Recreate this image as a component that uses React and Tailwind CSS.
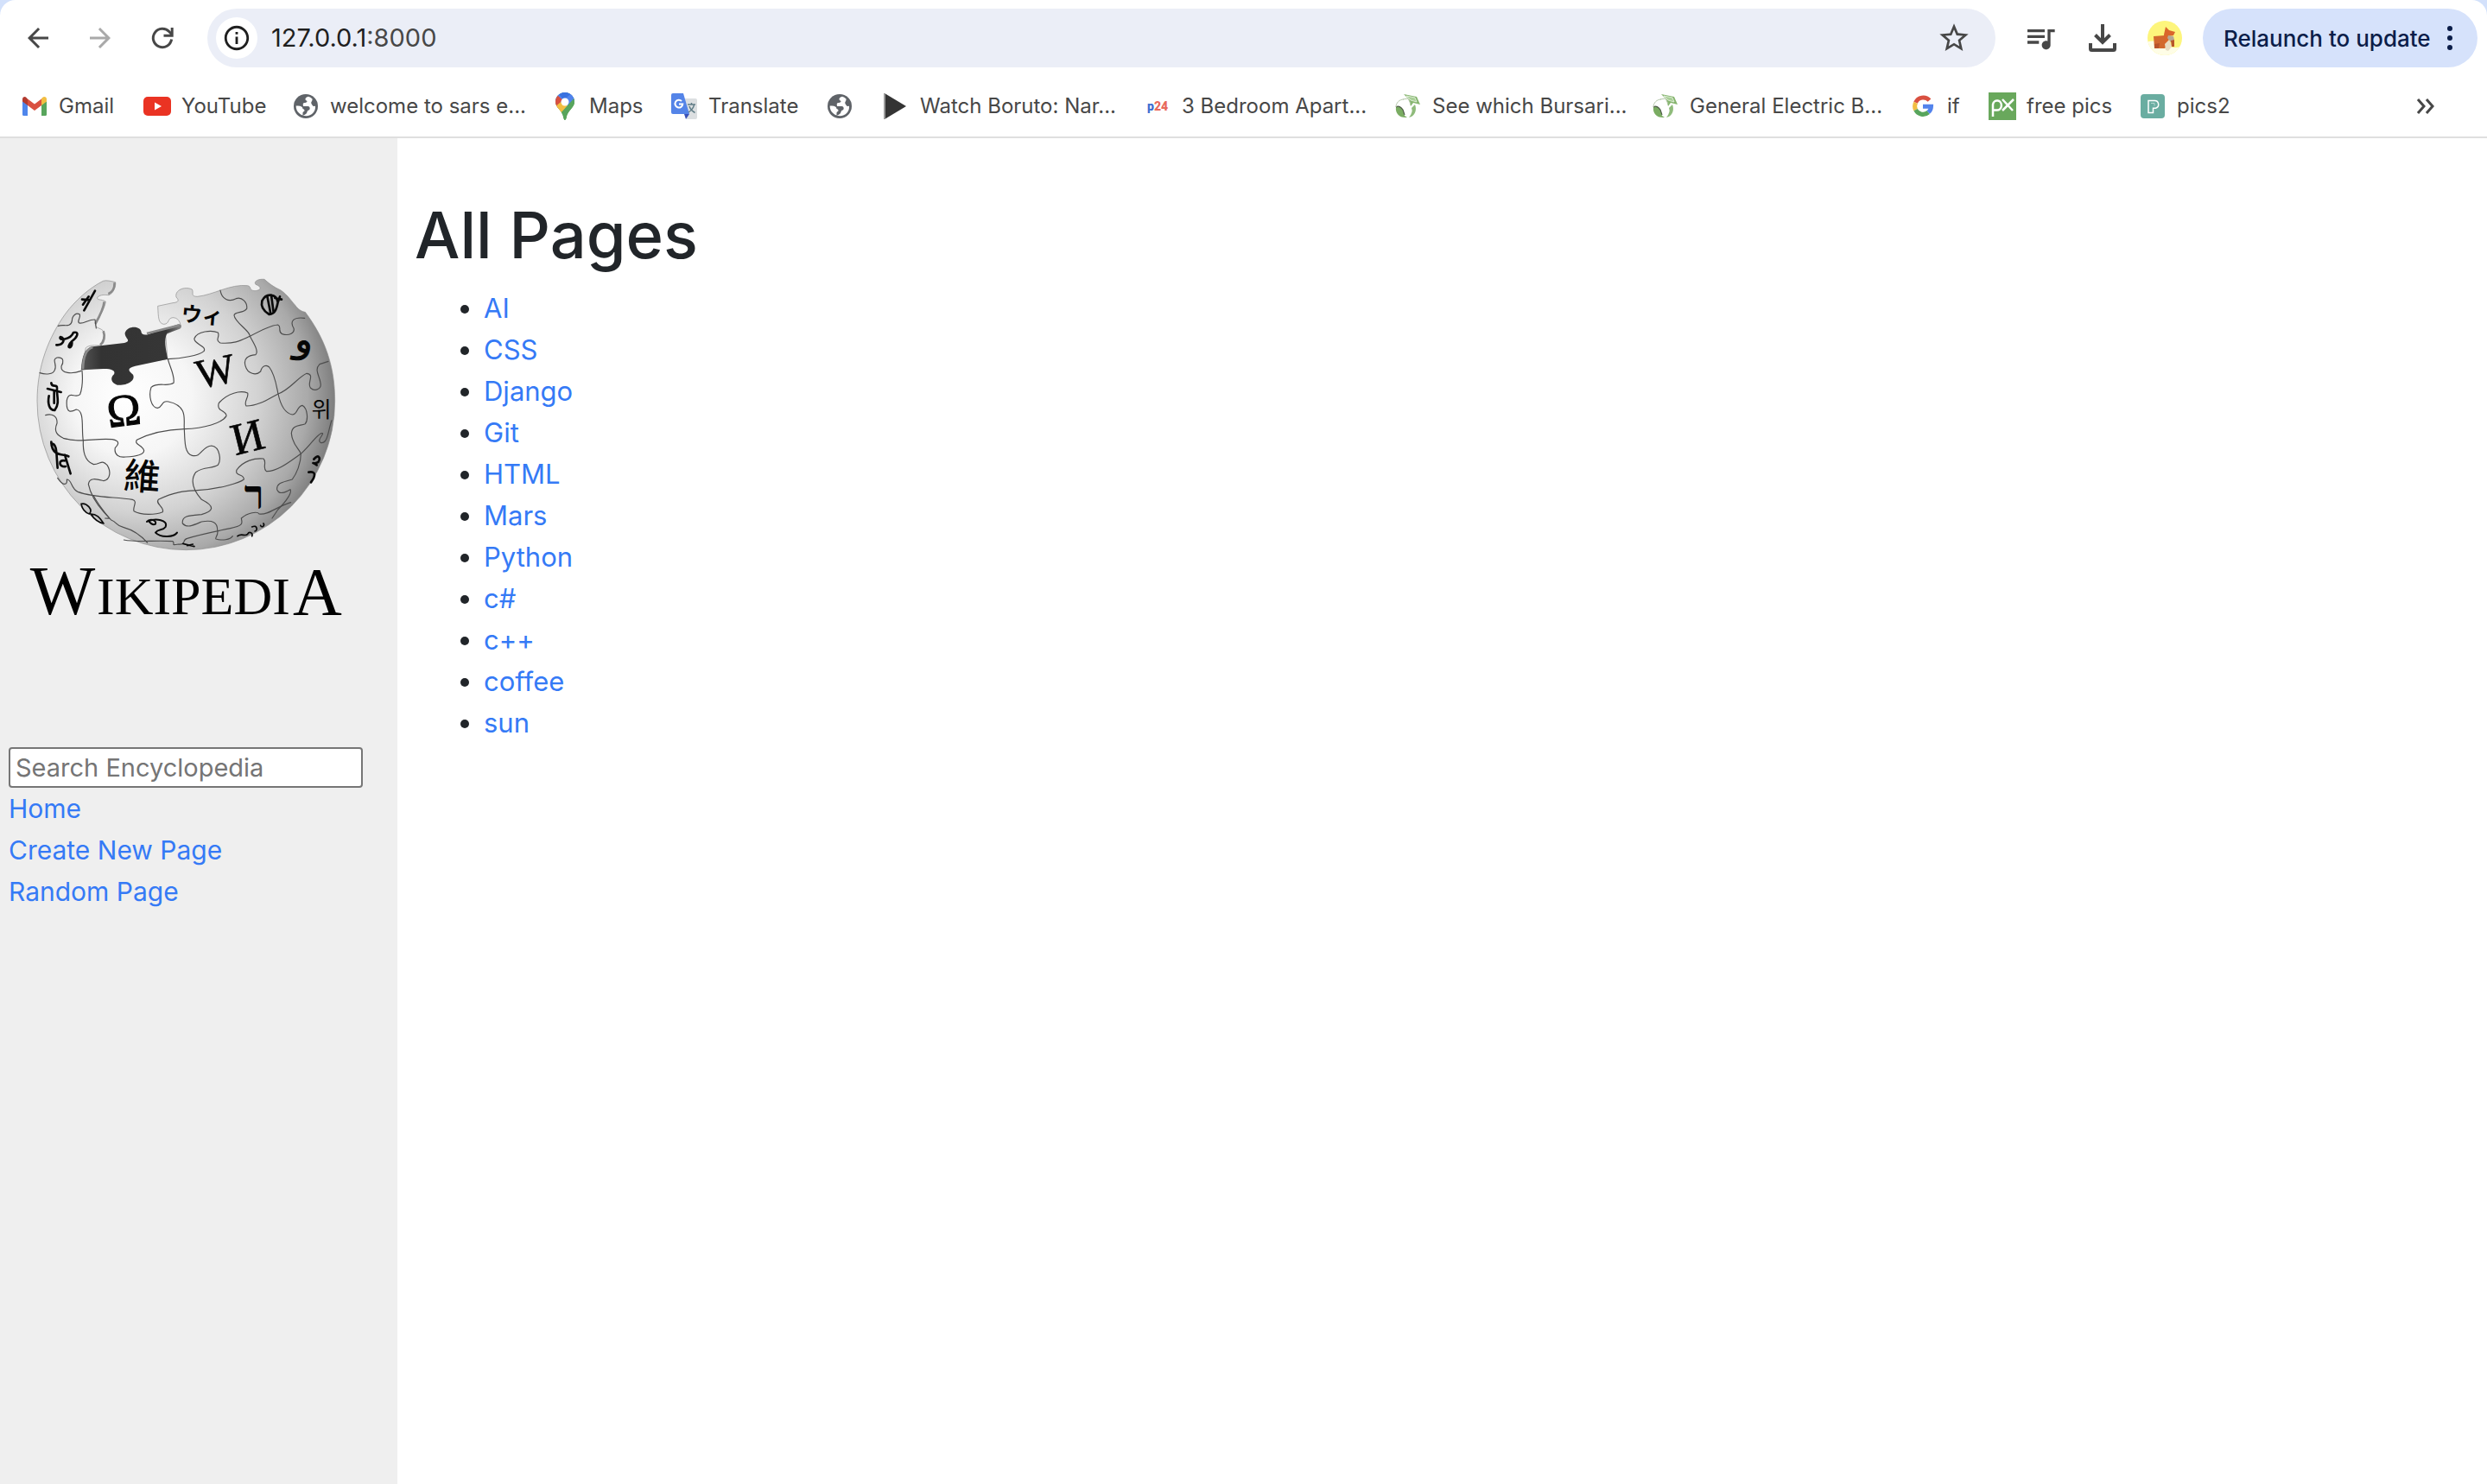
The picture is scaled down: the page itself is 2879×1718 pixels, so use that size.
import React from "react";
import { MdArrowBack, MdArrowForward, MdInfoOutline, MdStarOutline, MdQueueMusic } from "react-icons/md";

const ReloadIcon = () => (
  <svg viewBox="0 0 36 36" className="size-9" fill="none" stroke="currentColor" strokeWidth="3">
    <path d="M28.6 19.5A10.7 10.7 0 1 1 26 10.800L29 14" />
    <path d="M29.200 6V15.200H19.500" />
  </svg>
);

const DownloadIcon = () => (
  <svg viewBox="0 0 32 32" className="size-8" fill="none" stroke="currentColor" strokeWidth="4">
    <path d="M16 0V20" />
    <path d="M7.500 12.500L16 21L24.500 12.500" />
    <path d="M2 22V28.500Q2 30 3.500 30H28.500Q30 30 30 28.500V22" />
  </svg>
);

const DotsIcon = () => (
  <svg viewBox="0 0 8 30" className="h-[30px] w-2" fill="currentColor">
    <circle cx="4" cy="4" r="3" />
    <circle cx="4" cy="15" r="3" />
    <circle cx="4" cy="26" r="3" />
  </svg>
);

const Avatar = () => (
  <svg viewBox="0 0 40 40" className="size-10">
    <defs>
      <clipPath id="avatar-clip"><circle cx="20" cy="20" r="20" /></clipPath>
    </defs>
    <g clipPath="url(#avatar-clip)">
      <rect width="40" height="40" fill="#fdf57c" />
      <path d="M0 24Q10 22 20 28T40 29V40H0Z" fill="#fefde6" />
      <path d="M7 18L20 17L25 28L20 32H8Z" fill="#d2692f" />
      <path d="M19 16L21 7L25 11L32 13L30 17L24 18L26 28L20 26Z" fill="#d9662b" />
      <path d="M24 17L30 18L31 22L27 25L23 20Z" fill="#b5a895" />
      <path d="M20 27L25 22L28 30L24 35L21 34Z" fill="#e9dcc3" />
      <path d="M27 23L31 22V30H28Z" fill="#b8562a" />
      <path d="M8 27L14 26L13 32H8Z" fill="#b9532a" />
    </g>
  </svg>
);

const GmailIcon = () => (
  <svg viewBox="0 0 32 32" className="size-8">
    <path d="M2 10V25.500Q2 27 3.500 27H8V14Z" fill="#4f86ec" />
    <path d="M24 14V27H28.500Q30 27 30 25.500V10Z" fill="#58a55c" />
    <path d="M24 8V15L30 10.500V8Q30 5 27 5Q26 5 24 7Z" fill="#f2be42" />
    <path d="M8 7.500L16 13.500L24 7.500V15L16 21L8 15Z" fill="#d95040" />
    <path d="M2 8V10.500L8 15V7.500Q6 5 5 5Q2 5 2 8Z" fill="#b33a2e" />
  </svg>
);

const YouTubeIcon = () => (
  <svg viewBox="0 0 32 32" className="size-8">
    <rect y="5" width="32" height="22" rx="5" fill="#ea3323" />
    <path d="M13 11.500V20.500L21 16Z" fill="#fff" />
  </svg>
);

const GlobeIcon = () => (
  <svg viewBox="0 0 32 32" className="size-8">
    <circle cx="16" cy="16" r="14" fill="#5f6368" />
    <path d="M19 4.800C15 5.500 14.500 9 17 9.500C18.500 10.500 16.500 12 14.500 12C12 12.500 13 14 13 16H18.500C21.500 16.500 21 20 19.500 20.500C17 21 18 24 16 25C15 26 14 26 12.500 26.600C20.500 29.500 28 23 27 15.500C24.500 17 23.500 15 22.500 13C21.500 11 24 10 23.500 7.500Q21.500 5.500 19 4.800Z" fill="#fff" />
    <path d="M4.700 15.500H7C10.500 15.500 12.500 17 12.500 19C14.500 19.500 15 21 14 22C12 22.500 12.500 24 12.500 26.600C7 24.500 4.500 20 4.700 15.500Z" fill="#fff" />
  </svg>
);

const MapsIcon = () => (
  <svg viewBox="0 0 32 32" className="size-8">
    <defs>
      <clipPath id="pin-clip">
        <path d="M16 0C9.500 0 5 5 5 11C5 18 13 20 14.500 30Q15 32 16 32Q17 32 17.500 30C19 20 27 18 27 11C27 5 22.500 0 16 0Z" />
      </clipPath>
    </defs>
    <g clipPath="url(#pin-clip)">
      <rect width="32" height="32" fill="#58a55c" />
      <path d="M0 0H32V3L16 22L4 10Z" fill="#5083ed" />
      <path d="M7 0H24L16 10Z" fill="#3a72e0" />
      <path d="M0 2L7.500 3.500L16 11L8 19L0 14Z" fill="#d95040" />
      <path d="M3 18L16 7L22 13L9 27Z" fill="#f2be42" />
      <path d="M11 11L24 1L30 8L20 16Z" fill="#5083ed" />
      <path d="M20 14L28 5V20L16 32H12L11 24Z" fill="#58a55c" />
    </g>
    <circle cx="16" cy="11" r="4.500" fill="#fff" />
  </svg>
);

const TranslateIcon = () => (
  <svg viewBox="0 0 32 32" className="size-8">
    <path d="M14 7H29Q31 7 31 9V29Q31 31 29 31H19Z" fill="#dcdfe1" />
    <path d="M16 25H22L18 31Z" fill="#3a52b8" />
    <path d="M3 1H15L22 25H3Q1 25 1 23V3Q1 1 3 1Z" fill="#5484e8" />
    <path d="M13 10A4.400 4.400 0 1 0 14.300 13.500H10" fill="none" stroke="#fff" strokeWidth="2" />
    <path d="M20 14H29M24.500 12V14M27.500 14C27 18 24 21 21 23M22 16C23 19 26 22 28.500 23.500" fill="none" stroke="#607d87" strokeWidth="1.500" />
  </svg>
);

const PlayIcon = () => (
  <svg viewBox="0 0 32 32" className="size-8">
    <path d="M3 1L28 16L3 31Z" fill="#343434" />
    <path d="M3 1V31" stroke="#9b9b9b" strokeWidth="2" />
  </svg>
);

const P24Icon = () => (
  <svg viewBox="0 0 32 32" className="size-8" fontFamily="Roboto, sans-serif" fontWeight="900" fontSize="14">
    <text x="4" y="21" fill="#3f6fd1">p</text>
    <text x="12" y="21" fill="#e8695c">24</text>
  </svg>
);

const BursaryIcon = () => (
  <svg viewBox="0 0 32 32" className="size-8">
    <path d="M11 2L26 5L30 14L22 12L19 16L17 8Z" fill="#86b56f" />
    <path d="M14 4L24 6L26 11L19 9Z" fill="#a9cf97" stroke="#eaf4e5" strokeWidth="0.800" />
    <path d="M2 17C5 15 8 17 10 20L12 27L15 29C6 30 1 24 2 17" fill="#7aac62" />
    <path d="M2 17C5 15 8 17 10 20L12 26" fill="none" stroke="#4c5a46" strokeWidth="1.200" />
    <path d="M2 17C2 12 6 8 11 8" fill="none" stroke="#b5c7ab" strokeWidth="1" />
    <path d="M20 28C25 25 26 19 24 14L20 18Q22 23 17 29Z" fill="#8fbb7b" />
    <path d="M10 8L16 7L19 13" fill="none" stroke="#b5c7ab" strokeWidth="1" />
  </svg>
);

const GoogleIcon = () => (
  <svg viewBox="0 0 32 32" className="size-8" fill="none" strokeWidth="5">
    <path d="M23.500 9.200A9.500 9.500 0 0 0 7.600 11.800" stroke="#d95040" />
    <path d="M7.600 11.800A9.500 9.500 0 0 0 7.600 20.200" stroke="#f2be42" />
    <path d="M7.600 20.200A9.500 9.500 0 0 0 22.300 23" stroke="#58a55c" />
    <path d="M22.300 23A9.500 9.500 0 0 0 25.500 16.300H16" stroke="#5383ec" />
  </svg>
);

const PxIcon = () => (
  <svg viewBox="0 0 32 32" className="size-8" fill="none" stroke="#fff" strokeWidth="2.500">
    <rect width="32" height="32" fill="#69a85c" stroke="none" />
    <path d="M5 28V14A5 5.500 0 1 1 9.500 20.500H5M16 8L28 21M29 8L16 21" />
  </svg>
);

const PexelsIcon = () => (
  <svg viewBox="0 0 32 32" className="size-8" fill="none" stroke="#fff" strokeWidth="1.500">
    <rect x="2" y="2" width="28" height="28" rx="4" fill="#6aada1" stroke="none" />
    <path d="M11 9.500H18A4.500 4.500 0 0 1 19.500 18.300H16.500V23.500H11Z" />
    <path d="M14 12.500H18V15.500" strokeWidth="1" opacity="0.500" />
  </svg>
);

const bookmarks = [
  { label: "Gmail", icon: GmailIcon, width: "w-[142px]" },
  { label: "YouTube", icon: YouTubeIcon, width: "w-[172px]" },
  { label: "welcome to sars e...", icon: GlobeIcon, width: "w-[300px]" },
  { label: "Maps", icon: MapsIcon, width: "w-[138px]" },
  { label: "Translate", icon: TranslateIcon, width: "w-[180px]" },
  { label: "", icon: GlobeIcon, width: "w-[65px]" },
  { label: "Watch Boruto: Nar...", icon: PlayIcon, width: "w-[303px]" },
  { label: "3 Bedroom Apart...", icon: P24Icon, width: "w-[290px]" },
  { label: "See which Bursari...", icon: BursaryIcon, width: "w-[298px]" },
  { label: "General Electric B...", icon: BursaryIcon, width: "w-[298px]" },
  { label: "if", icon: GoogleIcon, width: "w-[92px]" },
  { label: "free pics", icon: PxIcon, width: "w-[174px]" },
  { label: "pics2", icon: PexelsIcon, width: "w-[120px]" },
];

function Browser() {
  return (
    <header className="border-b-2 border-[#dfdfdf] bg-[#d3e1fb] text-[#474747]">
      <div className="rounded-t-[18px] bg-white">
        <div className="flex h-22 items-center pr-[11px] pl-2">
          <button aria-label="Back" className="flex w-18 justify-center"><MdArrowBack className="size-9" /></button>
          <button aria-label="Forward" className="flex w-18 justify-center text-[#a9a9a9]"><MdArrowForward className="size-9" /></button>
          <button aria-label="Reload" className="flex w-18 justify-center"><ReloadIcon /></button>
          <div className="ml-4 flex h-17 flex-1 items-center rounded-full bg-[#ebeef7] pr-7 pl-[10px]">
            <button aria-label="Site information" className="flex size-12 items-center justify-center rounded-full bg-white text-[#1f1f1f]">
              <MdInfoOutline className="size-[34px]" />
            </button>
            <div className="ml-4 flex-1 text-[29px]"><span className="text-[#1f1f1f]">127.0.0.1</span>:8000</div>
            <button aria-label="Bookmark this page"><MdStarOutline className="size-10" /></button>
          </div>
          <button aria-label="Media controls" className="ml-4 flex w-18 justify-center"><MdQueueMusic className="size-10" /></button>
          <button aria-label="Downloads" className="flex w-18 justify-center"><DownloadIcon /></button>
          <button aria-label="Profile" className="flex w-18 justify-center"><Avatar /></button>
          <button className="ml-2 flex h-17 w-[318px] items-center justify-between rounded-full bg-[#d6e2fb] pr-7 pl-6 text-[26px] font-medium text-[#0b1d49]">
            <span className="whitespace-nowrap">Relaunch to update</span>
            <DotsIcon />
          </button>
        </div>
        <nav aria-label="Bookmarks" className="flex h-[70px] items-center pl-6 text-[24px]">
          {bookmarks.map(({ label, icon: Icon, width }, i) => (
            <a key={i} href="#" aria-label={label || "Bookmark"} className={`flex shrink-0 items-center gap-3 whitespace-nowrap ${width}`}>
              <Icon />
              {label && <span>{label}</span>}
            </a>
          ))}
          <button aria-label="More bookmarks" className="mr-[60px] ml-auto">
            <svg viewBox="0 0 22 20" className="h-5 w-[22px]" fill="none" stroke="currentColor" strokeWidth="3">
              <path d="M2 2L9 10L2 18M12 2L19 10L12 18" />
            </svg>
          </button>
        </nav>
      </div>
    </header>
  );
}

function WikipediaLogo() {
  return (
    <svg viewBox="0 0 1200 1320" className="h-[440px] w-[400px]" role="img" aria-label="Wikipedia">
      <defs>
        <radialGradient id="sphere" gradientUnits="userSpaceOnUse" cx="470" cy="470" r="680" fx="370" fy="480">
          <stop offset="0" stopColor="#ffffff" />
          <stop offset="0.300" stopColor="#f6f6f6" />
          <stop offset="0.600" stopColor="#d2d2d2" />
          <stop offset="0.820" stopColor="#a9a9a9" />
          <stop offset="1" stopColor="#696969" />
        </radialGradient>
        <linearGradient id="hole" x1="0" y1="0" x2="1" y2="0">
          <stop offset="0" stopColor="#555" />
          <stop offset="0.200" stopColor="#333" />
          <stop offset="0.850" stopColor="#363636" />
          <stop offset="1" stopColor="#888" />
        </linearGradient>
      </defs>
      <path
        fill="url(#sphere)"
        stroke="#8d8d8d"
        strokeWidth="2"
        d="M298 76C308 72 325 76 341 80C343 95 335 118 318 125C303 124 290 122 278 133C276 144 292 138 307 147C305 168 288 195 272 225C268 240 288 238 297 248C308 262 306 290 290 300C270 300 250 297 238 308L222 385L522 347L515 262L568 235C566 215 556 203 540 203C520 205 530 226 508 226C490 222 490 205 488 163L540 152C562 150 562 142 552 132C546 108 580 93 607 105C614 115 600 130 625 130C680 125 740 85 800 92C815 95 803 109 825 110C850 108 848 95 828 88C820 78 835 68 858 70C875 85 890 97 915 108C940 125 955 150 965 160C975 175 990 183 1000 184C1068 275 1103 370 1103 493A517 517 0 0 1 69 493C69 370 110 270 167 190C200 145 250 100 298 76Z"
      />
      <path
        fill="url(#hole)"
        d="M222 385C224 335 236 308 262 304L372 291C400 283 372 276 374 256C384 230 424 232 430 250C430 262 442 266 458 260L560 226C572 224 574 242 560 244L520 258C508 280 516 315 523 347L410 371C380 378 385 387 402 401C412 422 380 440 347 437C325 430 322 412 336 400C344 385 320 380 298 381Z"
      />
      <path fill="none" stroke="#8a8a8a" strokeWidth="8" d="M228 382C229 340 238 312 262 306M338 82C338 100 330 116 316 121M302 148C300 170 286 198 271 225M299 250C306 268 300 288 288 298M450 258L562 230" />
      <g fill="none" stroke="#4d4d4d" strokeWidth="3.500" strokeLinecap="round" strokeLinejoin="round">
        <path d="M142 232C160 225 185 240 190 215C190 195 205 185 217 192C222 205 205 215 215 222C230 226 250 208 270 210L274 240" />
        <path d="M78 395C100 402 125 400 130 385C140 365 118 350 138 342C165 340 160 360 153 372C150 398 190 400 222 388" />
        <path d="M225 388C228 420 225 450 218 470C200 485 180 455 172 490C168 540 190 530 205 522C235 525 222 590 229 630" />
        <path d="M98 542C120 535 140 545 138 570C125 600 140 612 160 622C220 640 270 620 330 626C360 632 350 645 340 655C335 680 355 690 375 687C410 685 440 680 440 665C435 645 405 645 415 628C460 605 520 592 580 590C650 588 710 570 726 545C728 525 690 530 700 500C730 465 775 455 800 465C805 480 785 495 795 510C840 510 880 480 906 468C945 455 975 410 1005 397C1035 400 1005 430 1018 447C1035 462 1058 450 1053 430C1050 405 1030 385 1050 365L1080 355" />
        <path d="M229 630C228 665 232 700 265 713C290 712 292 695 312 715C325 735 325 765 300 770C280 765 250 755 247 782C255 820 275 850 300 878C325 905 325 900 305 900" />
        <path d="M523 347C530 375 548 405 543 430C520 445 490 425 465 445C455 475 465 515 487 517C505 515 500 490 525 495C595 510 577 560 580 590C582 630 580 675 607 682C640 690 640 650 675 648C705 652 708 700 697 715C675 730 650 718 620 740C595 775 618 810 640 835C690 860 680 875 640 887C600 890 570 890 574 918C590 935 610 925 640 912C680 905 695 915 695 940C700 960 685 968 690 972C710 978 740 975 748 962" />
        <path d="M523 347C570 345 630 335 648 320C660 300 610 295 615 275C625 250 675 245 697 255C705 270 685 280 705 291C760 295 780 280 808 268C850 245 880 230 905 228C920 235 902 250 920 260C945 268 965 255 960 240C945 215 960 200 998 205" />
        <path d="M705 108C710 140 735 150 760 137C780 130 800 150 797 172C785 190 755 180 753 195C755 220 810 250 808 268C820 290 840 320 828 332C800 335 785 345 792 370C800 400 830 405 845 390C850 370 865 365 875 375C895 400 900 440 906 468C915 510 930 535 955 540C975 540 970 510 990 508C1010 520 1010 560 1000 572C980 580 955 575 952 605C955 645 980 660 985 676C985 710 970 745 955 765C925 775 900 775 902 800C910 820 930 810 948 800C955 810 935 840 905 870L885 900" />
        <path d="M140 760C160 790 175 785 172 765C190 765 185 795 210 808C270 830 340 825 400 835C420 840 400 860 405 875C430 890 480 888 505 878C512 860 478 850 490 835C550 805 590 805 625 803C700 800 775 775 787 765C788 745 755 755 762 732C785 700 825 690 855 693C868 705 850 725 865 737C905 738 950 700 985 676C1020 645 1035 615 1055 605C1075 600 1035 630 1055 638C1080 640 1080 590 1092 560" />
        <path d="M265 822C280 850 310 890 325 905C350 915 340 925 370 932C400 940 425 955 452 985M370 975C420 985 480 975 540 980C550 990 530 995 560 990C590 992 570 975 590 970C640 955 690 945 740 935C790 925 780 915 778 900C800 880 835 875 840 885C870 890 900 860 950 845" />
      </g>
      <g fill="#060606" fontFamily="'Liberation Serif', serif">
        <text x="620" y="438" fontSize="144" stroke="#060606" strokeWidth="2" transform="rotate(-12 688 390)">W</text>
        <text x="312" y="578" fontSize="158" stroke="#060606" strokeWidth="3" transform="rotate(-7 370 530)">Ω</text>
        <text x="744" y="670" fontSize="156" stroke="#060606" strokeWidth="2" transform="rotate(-14 800 620)">И</text>
        <text x="370" y="800" fontSize="126" fontFamily="'Noto Sans CJK TC', sans-serif" fontWeight="500" transform="rotate(4 430 760)">維</text>
        <text x="570" y="220" fontSize="72" fontFamily="'Noto Sans CJK JP', sans-serif" fontWeight="700" transform="rotate(5 635 195)">ウィ</text>
        <text x="1022" y="550" fontSize="74" fontFamily="'Noto Sans CJK KR', sans-serif">위</text>
        <text x="962" y="322" fontSize="130" fontFamily="'DejaVu Sans', sans-serif" stroke="#060606" strokeWidth="3" transform="rotate(12 985 310)">و</text>
        <text x="788" y="868" fontSize="140" fontFamily="'Liberation Serif', serif" fontWeight="700">ר</text>
      </g>
      <g fill="none" stroke="#0a0a0a" strokeWidth="8" strokeLinecap="round" strokeLinejoin="round">
        <path d="M270 110L232 178M225 140L252 142M228 158L248 130" />
        <path d="M136 298C160 300 170 275 150 270C140 285 185 280 195 255C220 250 205 275 190 285C165 310 190 315 190 290" />
        <path d="M105 450L152 462M118 430C120 450 140 430 138 450C135 470 150 500 130 525C110 525 105 500 110 475M128 460V500" />
        <path d="M118 635C120 690 165 675 178 685M118 640C140 640 135 680 140 725M165 680L185 745M165 700C140 695 145 725 168 720" />
        <path d="M222 850C240 845 265 870 250 885C235 880 225 865 222 850M255 885C280 885 290 905 300 918C280 915 265 900 255 885" strokeWidth="5" />
        <path d="M450 912C460 900 485 905 480 920C470 925 460 915 455 908M455 910C480 900 525 905 515 930C505 945 490 935 480 950C500 970 545 965 555 950" strokeWidth="6" />
        <path d="M850 145C865 115 900 120 905 150C900 175 895 190 875 192C855 180 845 165 850 145M868 128L880 190M882 125L890 185M895 135L918 140M912 130L905 150" />
        <path d="M1030 695C1045 675 1055 690 1045 705C1025 715 1020 700 1040 715M1012 740C1040 735 1035 755 1020 775" />
        <path d="M765 962C780 950 790 965 800 955C805 945 820 950 815 962M815 930C835 920 835 945 825 945M845 925C850 935 860 925 855 918M575 988L615 998M590 995L610 990" strokeWidth="5" />
      </g>
      <g fill="#000" fontFamily="'Liberation Serif', serif">
        <text x="44" y="1234" fontSize="240">W</text>
        <text x="276" y="1234" fontSize="186">IKIPEDI</text>
        <text x="957" y="1234" fontSize="236">A</text>
      </g>
    </svg>
  );
}

const pages = ["AI", "CSS", "Django", "Git", "HTML", "Mars", "Python", "c#", "c++", "coffee", "sun"];
const links = ["Home", "Create New Page", "Random Page"];

export default function App() {
  return (
    <div className="flex min-h-screen flex-col bg-white font-['Inter',sans-serif] text-[#212529]">
      <Browser />
      <div className="flex flex-1 text-[31px] leading-[48px]">
        <aside className="w-[460px] shrink-0 bg-[#efefef] px-[10px] pt-[140px] text-[30px]">
          <div className="ml-[10px]"><WikipediaLogo /></div>
          <form className="mt-[125px]" onSubmit={(e) => e.preventDefault()}>
            <input
              type="text"
              aria-label="Search Encyclopedia"
              placeholder="Search Encyclopedia"
              className="block h-[47px] w-[410px] rounded-[4px] border-2 border-[#767676] bg-white px-[6px] text-[29px] placeholder:text-[#757575]"
            />
          </form>
          <nav className="flex flex-col items-start text-[#357af6]">
            {links.map((l) => <a key={l} href="#">{l}</a>)}
          </nav>
        </aside>
        <main className="flex-1 px-5 pt-[64px]">
          <h1 className="text-[74px] leading-[96px] font-medium">All Pages</h1>
          <ul className="mt-[13px] list-disc pl-20">
            {pages.map((p) => (
              <li key={p}><a href="#" className="text-[#357af6]">{p}</a></li>
            ))}
          </ul>
        </main>
      </div>
    </div>
  );
}
